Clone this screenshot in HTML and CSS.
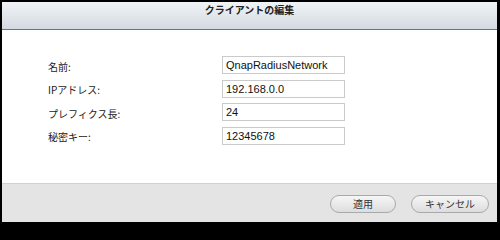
FILE: index.html
```html
<!DOCTYPE html>
<html lang="ja">
<head>
<meta charset="utf-8">
<link rel="stylesheet" href="styles.css">
</head>
<body>
<div class="dialog">
  <div class="header">クライアントの編集</div>
  <div class="content">
    <div class="form">
      <label class="label">名前:</label>
      <div class="field">QnapRadiusNetwork</div>
      <label class="label">IPアドレス:</label>
      <div class="field">192.168.0.0</div>
      <label class="label">プレフィクス長:</label>
      <div class="field">24</div>
      <label class="label">秘密キー:</label>
      <div class="field">12345678</div>
    </div>
  </div>
  <div class="footer">
    <button class="btn btn-apply">適用</button>
    <button class="btn btn-cancel">キャンセル</button>
  </div>
</div>
</body>
</html>
```
FILE: styles.css
```css
html, body {
  margin: 0;
  padding: 0;
  background: #000;
}
body {
  width: 500px;
  height: 224px;
  overflow: hidden;
}
.dialog {
  box-sizing: border-box;
  width: 500px;
  height: 224px;
  border-style: solid;
  border-color: #000;
  border-width: 2px 3px 2px 2px;
  display: flex;
  flex-direction: column;
  background: #fff;
  font-family: "Noto Sans CJK JP", "Liberation Sans", sans-serif;
}
.header {
  height: 26px;
  border-bottom: 1px solid #707274;
  background: linear-gradient(#f1f4f6, #d3dae1);
  text-align: center;
  font-weight: bold;
  font-size: 10px;
  line-height: 14px;
  padding-top: 1px;
  box-sizing: content-box;
  color: #222;
}
.content {
  flex: 1;
  padding: 26px 0 0 46px;
}
.form {
  display: grid;
  grid-template-columns: 174px 123px;
  row-gap: 5.5px;
  align-items: center;
}
.label {
  font-size: 10px;
  color: #222;
  line-height: 14px;
  padding-top: 3px;
}
.field {
  box-sizing: border-box;
  height: 18px;
  border: 1px solid #cacaca;
  padding: 0 3px;
  font-family: "Liberation Sans", sans-serif;
  font-size: 11px;
  line-height: 16px;
  color: #111;
}
.footer {
  height: 36px;
  border-top: 1px solid #d2d2d2;
  background: #e4e4e4;
  display: flex;
  justify-content: flex-end;
  align-items: center;
  gap: 15px;
  padding: 2px 8px 0 0;
  box-sizing: content-box;
}
.btn {
  box-sizing: border-box;
  height: 18px;
  border: 1px solid #a9a9a9;
  border-radius: 9px;
  background: linear-gradient(#f6f6f6, #dddddd);
  font-family: "Noto Sans CJK JP", sans-serif;
  font-size: 10px;
  line-height: 14px;
  color: #333;
  padding: 0;
}
.btn-apply { width: 66px; }
.btn-cancel { width: 78px; }
```
